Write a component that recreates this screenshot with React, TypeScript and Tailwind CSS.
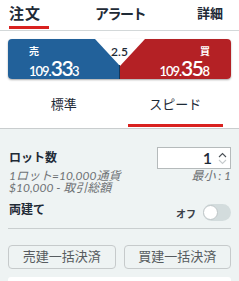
import React from "react";

export default function App() {
  const font = { fontFamily: 'Lato, "Noto Sans CJK JP", sans-serif' };
  return (
    <div className="w-[239px] h-[281px] bg-white overflow-hidden text-[#1e2a36]" style={font}>
      {/* top tabs */}
      <div className="flex h-[31px] border-b border-[#d3d8d9]">
        <div className="w-[58px] pl-[9px] flex flex-col">
          <div className="pt-[5px] text-[15px] leading-[17px] font-bold tracking-[1px]">注文</div>
          <div className="mt-auto mb-[1px] h-[3px] w-[40px] bg-[#d9211f]" />
        </div>
        <div className="w-[98px] pl-[37px] pt-[5px] text-[14px] leading-[17px] font-semibold tracking-[-1.5px]">アラート</div>
        <div className="flex-1 pl-[41px] pt-[5px] text-[13px] leading-[17px] font-semibold">詳細</div>
      </div>

      {/* price panel */}
      <div className="mx-[8px] mt-[8px] h-[40px] relative flex rounded-[4px] overflow-hidden shadow-[0_1px_2px_rgba(0,0,0,0.35)]">
        <div className="flex-1 bg-[#22619a] pl-[21px] text-white">
          <div className="mt-[6px] text-[10px] leading-[12px] font-bold">売</div>
          <div className="leading-[22px] font-semibold">
            <span className="text-[13px] tracking-[-1px]">109.</span>
            <span className="text-[21px] tracking-[-1.5px]">33</span>
            <span className="text-[13px] tracking-[-1px]">3</span>
          </div>
        </div>
        <div className="flex-1 bg-[#b42125] pr-[21px] text-white text-right">
          <div className="mt-[6px] text-[10px] leading-[12px] font-bold">買</div>
          <div className="leading-[22px] font-semibold">
            <span className="text-[13px] tracking-[-1px]">109.</span>
            <span className="text-[21px] tracking-[-1.5px]">35</span>
            <span className="text-[13px]">8</span>
          </div>
        </div>
        <svg className="absolute left-0 top-0" width="223" height="40" viewBox="0 0 223 40">
          <polygon points="87,0 137,0 112,27" fill="#ffffff" />
          <line x1="111.5" y1="26" x2="111.5" y2="40" stroke="#15375a" strokeWidth="1" />
        </svg>
        <div className="absolute left-0 right-0 top-[6px] text-center text-[12px] leading-[14px] font-semibold text-[#1e2a36]">
          2.5
        </div>
      </div>

      {/* sub tabs */}
      <div className="flex h-[50px] border-b border-[#c9cdce] px-[8px]">
        <div className="flex-1 flex flex-col items-center">
          <div className="pt-[17px] text-[13px] leading-[16px]">標準</div>
        </div>
        <div className="flex-1 flex flex-col items-center">
          <div className="pt-[17px] text-[13px] leading-[16px]">スピード</div>
          <div className="mt-auto mb-[1px] h-[3px] self-stretch mx-[8px] bg-[#d9211f]" />
        </div>
      </div>

      {/* settings */}
      <div className="bg-[#eef3f3] px-[8px] pt-[18px] h-[200px]">
        <div className="flex items-center justify-between">
          <div className="pl-[1px] text-[12px] leading-[14px] font-bold">ロット数</div>
          <div className="w-[74px] h-[22px] bg-white border border-[#b5babb] flex items-center justify-end pr-[3px]">
            <span className="text-[16px] leading-[18px] font-semibold text-[#1e2a36] mr-[6px]">1</span>
            <div className="flex flex-col items-center gap-[1px]">
              <svg width="9" height="6" viewBox="0 0 9 6">
                <polyline points="1,5 4.5,1.5 8,5" fill="none" stroke="#4a5056" strokeWidth="1.1" />
              </svg>
              <svg width="9" height="6" viewBox="0 0 9 6">
                <polyline points="1,1 4.5,4.5 8,1" fill="none" stroke="#c6cbcd" strokeWidth="1.1" />
              </svg>
            </div>
          </div>
        </div>
        <div className="mt-[1px] flex justify-between italic text-[12px] leading-[12px] text-[#6e7275]">
          <div className="pl-[1px]">
            <div>1ロット=10,000通貨</div>
            <div>$10,000 - 取引総額</div>
          </div>
          <div>最小 : 1</div>
        </div>
        <div className="mt-[9px] flex justify-between h-[18px]">
          <div className="pl-[1px] text-[12px] leading-[14px] font-bold">両建て</div>
          <div className="flex items-center gap-[7px]">
            <span className="text-[10px] leading-[12px] font-bold text-[#3a4048] mt-[3px]">オフ</span>
            <div className="w-[28px] h-[17px] rounded-full bg-[#d3dcdd] relative">
              <div className="absolute left-0 top-[1px] w-[15px] h-[15px] rounded-full bg-white border border-[#bfc6c8]" />
            </div>
          </div>
        </div>
        <div className="mt-[7px] border-t border-[#c9cecf]" />
        <div className="mt-[16px] flex gap-[8px]">
          <div className="flex-1 h-[24px] rounded-[4px] border border-[#c6cacb] flex items-center justify-center text-[13px] text-[#575c60]">
            売建一括決済
          </div>
          <div className="flex-1 h-[24px] rounded-[4px] border border-[#c6cacb] flex items-center justify-center text-[13px] text-[#575c60]">
            買建一括決済
          </div>
        </div>
        <div className="mt-[8px] h-[20px] bg-white rounded-t-[3px]" />
      </div>
    </div>
  );
}
